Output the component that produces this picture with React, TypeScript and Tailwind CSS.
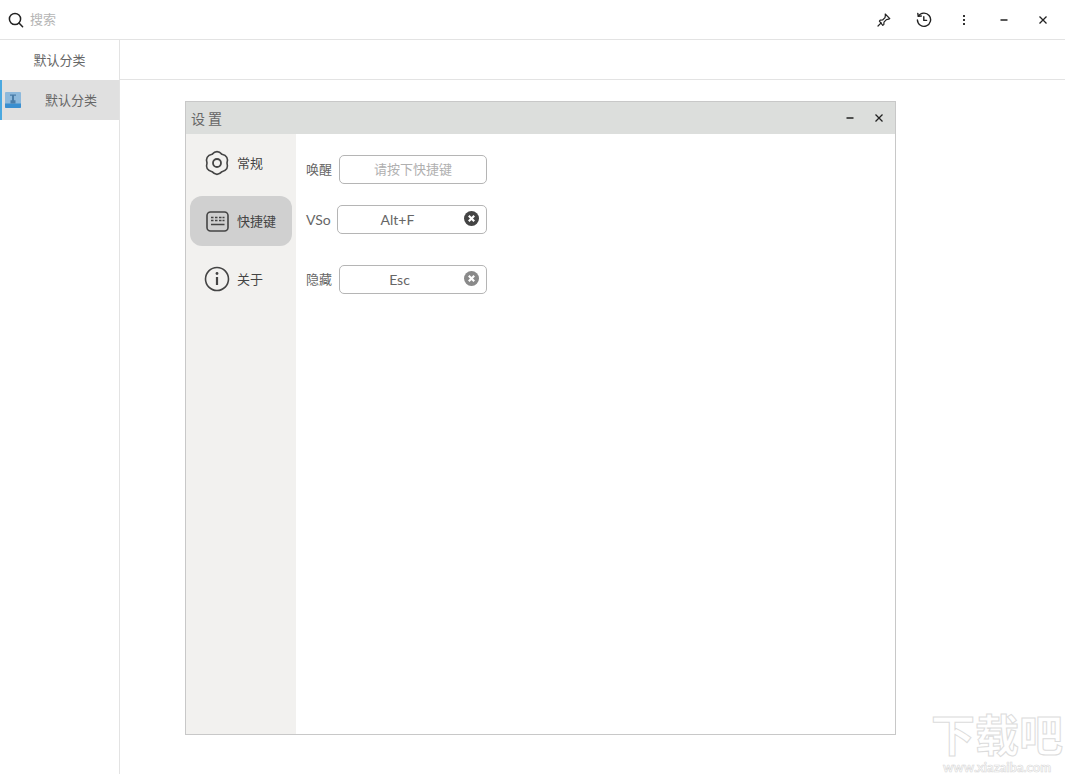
import React from "react";

const Search = () => (
  <svg width="16" height="16" viewBox="0 0 16 16" fill="none" stroke="#222" strokeWidth="1.5" strokeLinecap="round">
    <circle cx="7" cy="7" r="5.6" />
    <path d="M11 11l3.6 3.8" />
  </svg>
);
const Pin = () => (
  <svg width="14" height="14" viewBox="0 0 14 14" fill="none" stroke="#222" strokeWidth="1.2" strokeLinejoin="round" strokeLinecap="round">
    <path d="M8.2 1l4.6 4.6-1 .6-2.4.4-2.4 2.6-.2 2.4-1 .8L2.4 8.2l.8-1 2.4-.2L8 4.6l.4-2.4z" />
    <path d="M4.2 9.8L1 13" />
  </svg>
);
const History = () => (
  <svg width="16" height="16" viewBox="0 0 16 16" fill="none" stroke="#222" strokeWidth="1.4" strokeLinecap="round" strokeLinejoin="round">
    <path d="M2.4 4.2A6.6 6.6 0 1 1 1.4 8" />
    <path d="M1.8 1.4l.5 3 3-.4" />
    <path d="M7.8 4.8v3.6h2.8" />
  </svg>
);
const Dots = () => (
  <svg width="4" height="12" viewBox="0 0 4 12" fill="#333">
    <rect x="1" y="1" width="2" height="2" />
    <rect x="1" y="5" width="2" height="2" />
    <rect x="1" y="9" width="2" height="2" />
  </svg>
);
const Minus = () => (
  <svg width="10" height="10" viewBox="0 0 10 10" stroke="#222" strokeWidth="1.5">
    <path d="M1.5 5h7" />
  </svg>
);
const Close = () => (
  <svg width="10" height="10" viewBox="0 0 10 10" stroke="#222" strokeWidth="1.3">
    <path d="M1.5 1.5l7 7M8.5 1.5l-7 7" />
  </svg>
);
const Gear = () => (
  <svg width="26" height="26" viewBox="0 0 26 26" fill="none" stroke="#444" strokeWidth="1.6">
    <path d="M23 13Q25.12 20 18 21.66Q13 27 8 21.66Q.88 20 3 13Q.88 6 8 4.34Q13 -1 18 4.34Q25.12 6 23 13z" />
    <circle cx="13" cy="13" r="4" strokeWidth="1.8" />
  </svg>
);
const Keyboard = () => (
  <svg width="23" height="21" viewBox="0 0 23 21" fill="none" stroke="#444">
    <rect x="1" y="1" width="21" height="19" rx="3.5" strokeWidth="1.6" />
    <path d="M5 6.5h2.5M9 6.5h2.5M13 6.5h2.5M16.5 6.5h2M5 9.5h2.5M9 9.5h2.5M13 9.5h2.5M16.5 9.5h2M5 13.5h13.5" strokeWidth="1.6" />
  </svg>
);
const Info = () => (
  <svg width="26" height="26" viewBox="0 0 26 26" fill="none" stroke="#444" strokeWidth="1.6">
    <circle cx="13" cy="13" r="11.5" />
    <path d="M13 11v8" strokeWidth="2.2" />
    <circle cx="13" cy="7.5" r="1.4" fill="#444" stroke="none" />
  </svg>
);
const ClearBtn = ({ color }: { color: string }) => (
  <svg width="15" height="15" viewBox="0 0 15 15">
    <circle cx="7.5" cy="7.5" r="7.5" fill={color} />
    <path d="M4.8 4.8l5.4 5.4M10.2 4.8l-5.4 5.4" stroke="#fff" strokeWidth="2.2" />
  </svg>
);
const AppIcon = () => (
  <svg width="16" height="16" viewBox="0 0 16 16">
    <rect width="16" height="16" rx="1" fill="#8db9dc" />
    <path d="M0 11.5h16V15a1 1 0 0 1-1 1H1a1 1 0 0 1-1-1z" fill="#3a8fd0" />
    <path d="M5 2.5h6v1.2H9v4.5h1.5v3.3h-5V8.2H7V3.700H5z" fill="#4a7da8" />
  </svg>
);

function NavItem({ icon, label, active, cls }: { icon: React.ReactNode; label: string; active?: boolean; cls: string }) {
  return (
    <div className={`flex items-center rounded-[12px] w-[102px] h-[50px] ${cls} ${active ? "bg-[#d0d0d0]" : ""}`}>
      <div className="w-[47px] flex justify-center pl-[7px]">{icon}</div>
      <span className="text-[13px] text-[#444] pt-[2px]">{label}</span>
    </div>
  );
}

function Field({ label, value, placeholder, clear, inputW, labelCls, mb }: { label: string; value: string; placeholder?: boolean; clear?: string; inputW: string; labelCls: string; mb: string }) {
  return (
    <div className={`flex items-center h-[29px] ${mb}`}>
      <span className={`text-[#666] ${labelCls}`}>{label}</span>
      <div className={`relative h-[29px] ${inputW} rounded-[5px] border border-[#b5b5b5] bg-white flex items-center`}>
        {placeholder ? (
          <span className="w-full text-center text-[13px] text-[#b0b0b0] pt-[1px]">{value}</span>
        ) : (
          <span className="w-[119px] text-center text-[14px] text-[#666]">{value}</span>
        )}
        {clear && (
          <span className="absolute right-[7px] top-[5px] flex">
            <ClearBtn color={clear} />
          </span>
        )}
      </div>
    </div>
  );
}

export default function App() {
  return (
    <div
      className="relative w-[1065px] h-[774px] bg-white overflow-hidden flex flex-col"
      style={{ fontFamily: 'Lato, "Noto Sans CJK SC", sans-serif' }}
    >
      <header className="h-[40px] shrink-0 border-b border-[#e3e3e3] flex items-center">
        <div className="flex items-center pl-[8px] flex-1">
          <Search />
          <span className="ml-[6px] text-[13px] text-[#b5b5b5] pt-[1px]">搜索</span>
        </div>
        <div className="flex items-center">
          <div className="w-[40px] flex justify-center"><Pin /></div>
          <div className="w-[40px] flex justify-center"><History /></div>
          <div className="w-[40px] flex justify-center"><Dots /></div>
          <div className="w-[40px] flex justify-center"><Minus /></div>
          <div className="w-[40px] flex justify-center pr-[2px]"><Close /></div>
          <div className="w-[1px]" />
        </div>
      </header>
      <div className="flex flex-1 min-h-0">
        <aside className="w-[120px] shrink-0 border-r border-[#e3e3e3]">
          <div className="h-[40px] flex items-center justify-center text-[13px] text-[#666] pt-[2px]">默认分类</div>
          <div className="h-[40px] bg-[#e0e0e0] border-l-2 border-[#4aa8e0] flex items-center pl-[3px]">
            <AppIcon />
            <span className="ml-[24px] text-[13px] text-[#666] pt-[2px]">默认分类</span>
          </div>
        </aside>
        <main className="flex-1 min-w-0 flex flex-col">
          <div className="h-[40px] shrink-0 border-b border-[#e3e3e3]" />
          <div className="pl-[65px] pt-[21px]">
            <section className="w-[711px] h-[634px] border border-[#c8c8c8] flex flex-col">
              <div className="h-[32px] shrink-0 bg-[#dcdedc] flex items-center">
                <span className="ml-[5px] text-[14px] tracking-[3px] text-[#666] flex-1 pt-[1px]">设置</span>
                <div className="w-[29px] flex justify-center pr-[4px]"><Minus /></div>
                <div className="w-[29px] flex justify-center pr-[4px]"><Close /></div>
              </div>
              <div className="flex flex-1 min-h-0">
                <nav className="w-[110px] shrink-0 bg-[#f2f1ef] pl-[4px] pt-[4px] flex flex-col">
                  <NavItem icon={<Gear />} label="常规" cls="mb-[8px]" />
                  <NavItem icon={<Keyboard />} label="快捷键" active cls="mb-[8px]" />
                  <NavItem icon={<Info />} label="关于" cls="" />
                </nav>
                <div className="flex-1 pl-[10px] pt-[21px]">
                  <Field label="唤醒" value="请按下快捷键" placeholder inputW="w-[148px]" labelCls="text-[13px] mr-[7px]" mb="mb-[21px]" />
                  <Field label="VSo" value="Alt+F" clear="#444" inputW="w-[150px]" labelCls="w-[31px] text-[14px]" mb="mb-[31px]" />
                  <Field label="隐藏" value="Esc" clear="#8a8a8a" inputW="w-[148px]" labelCls="text-[13px] mr-[7px]" mb="" />
                </div>
              </div>
            </section>
          </div>
        </main>
      </div>
      <div className="absolute left-[929px] top-[709px] w-[136px] flex flex-col items-center pointer-events-none whitespace-nowrap">
        <span className="text-[44px] leading-[52px] font-bold text-white [-webkit-text-stroke:1px_#dcdcdc]">下载吧</span>
        <span className="text-[13px] leading-[12px] font-bold text-white [-webkit-text-stroke:0.6px_#d8d8d8]">www.xiazaiba.com</span>
      </div>
    </div>
  );
}
